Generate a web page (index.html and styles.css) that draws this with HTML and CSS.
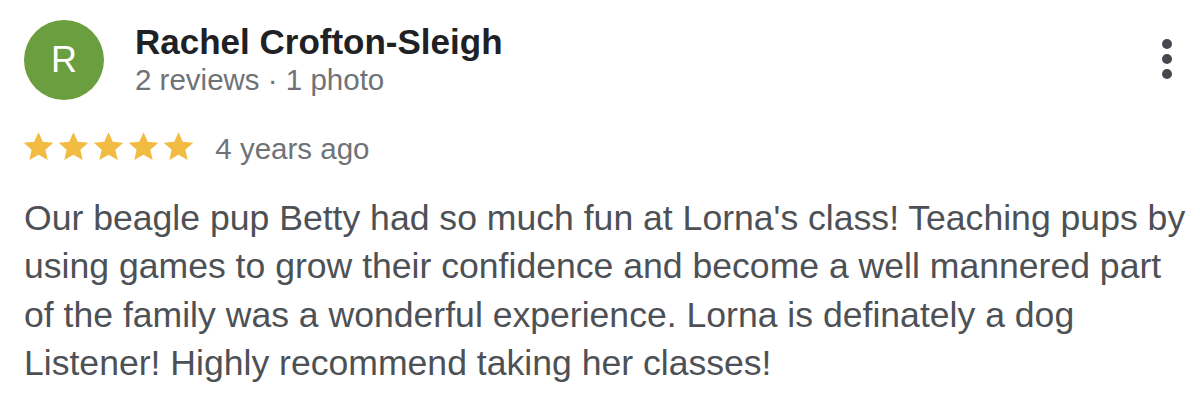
FILE: index.html
```html
<!DOCTYPE html>
<html>
<head>
<meta charset="utf-8">
<link rel="stylesheet" href="styles.css">
</head>
<body>
<div class="review">
  <div class="header">
    <div class="avatar">R</div>
    <div class="who">
      <div class="name">Rachel Crofton-Sleigh</div>
      <div class="meta">2 reviews · 1 photo</div>
    </div>
    <div class="more" aria-label="More options">
      <span class="dot"></span><span class="dot"></span><span class="dot"></span>
    </div>
  </div>
  <div class="rating">
    <div class="stars">
      <svg viewBox="0 0 24 24" class="star"><path d="M12 2.2l2.94 6.6 7.2.68-5.43 4.8 1.6 7.06L12 17.64 5.69 21.34l1.6-7.06L1.86 9.48l7.2-.68z"/></svg>
      <svg viewBox="0 0 24 24" class="star"><path d="M12 2.2l2.94 6.6 7.2.68-5.43 4.8 1.6 7.06L12 17.64 5.69 21.34l1.6-7.06L1.86 9.48l7.2-.68z"/></svg>
      <svg viewBox="0 0 24 24" class="star"><path d="M12 2.2l2.94 6.6 7.2.68-5.43 4.8 1.6 7.06L12 17.64 5.69 21.34l1.6-7.06L1.86 9.48l7.2-.68z"/></svg>
      <svg viewBox="0 0 24 24" class="star"><path d="M12 2.2l2.94 6.6 7.2.68-5.43 4.8 1.6 7.06L12 17.64 5.69 21.34l1.6-7.06L1.86 9.48l7.2-.68z"/></svg>
      <svg viewBox="0 0 24 24" class="star"><path d="M12 2.2l2.94 6.6 7.2.68-5.43 4.8 1.6 7.06L12 17.64 5.69 21.34l1.6-7.06L1.86 9.48l7.2-.68z"/></svg>
    </div>
    <span class="date">4 years ago</span>
  </div>
  <p class="text">Our beagle pup Betty had so much fun at Lorna's class! Teaching pups by<br>using games to grow their confidence and become a well mannered part<br>of the family was a wonderful experience. Lorna is definately a dog<br>Listener! Highly recommend taking her classes!</p>
</div>
</body>
</html>
```
FILE: styles.css
```css
html, body {
  margin: 0;
  padding: 0;
  background: #ffffff;
}
body {
  font-family: "Liberation Sans", Arial, Helvetica, sans-serif;
  width: 1200px;
  height: 409px;
  overflow: hidden;
}
.review {
  padding: 20px 16px 0 24px;
}
.header {
  display: flex;
  align-items: flex-start;
}
.avatar {
  width: 80px;
  height: 80px;
  border-radius: 50%;
  background: #6b9e3e;
  color: #ffffff;
  font-size: 36px;
  display: flex;
  align-items: center;
  justify-content: center;
  flex-shrink: 0;
}
.who {
  margin-left: 31px;
  flex: 1;
  padding-top: 2px;
}
.name {
  font-size: 35px;
  font-weight: bold;
  color: #202124;
  line-height: 40px;
}
.meta {
  font-size: 29.5px;
  color: #6f7378;
  line-height: 34px;
  margin-top: 1px;
}
.more {
  display: flex;
  flex-direction: column;
  align-items: center;
  gap: 5px;
  margin-top: 19px;
  margin-right: 12px;
}
.dot {
  width: 10px;
  height: 10px;
  border-radius: 50%;
  background: #45484c;
}
.rating {
  display: flex;
  align-items: flex-start;
  margin-top: 31.5px;
  height: 34px;
}
.stars {
  display: flex;
  margin-left: -2.7px;
  margin-top: -3px;
}
.star {
  width: 35px;
  height: 35px;
  fill: #f2bb42;
}
.date {
  margin-left: 19px;
  font-size: 29.5px;
  line-height: 34px;
  color: #6f7378;
}
.text {
  margin: 28px 0 0 0;
  font-size: 35.6px;
  line-height: 48.5px;
  color: #4d5156;
  white-space: nowrap;
}
```
